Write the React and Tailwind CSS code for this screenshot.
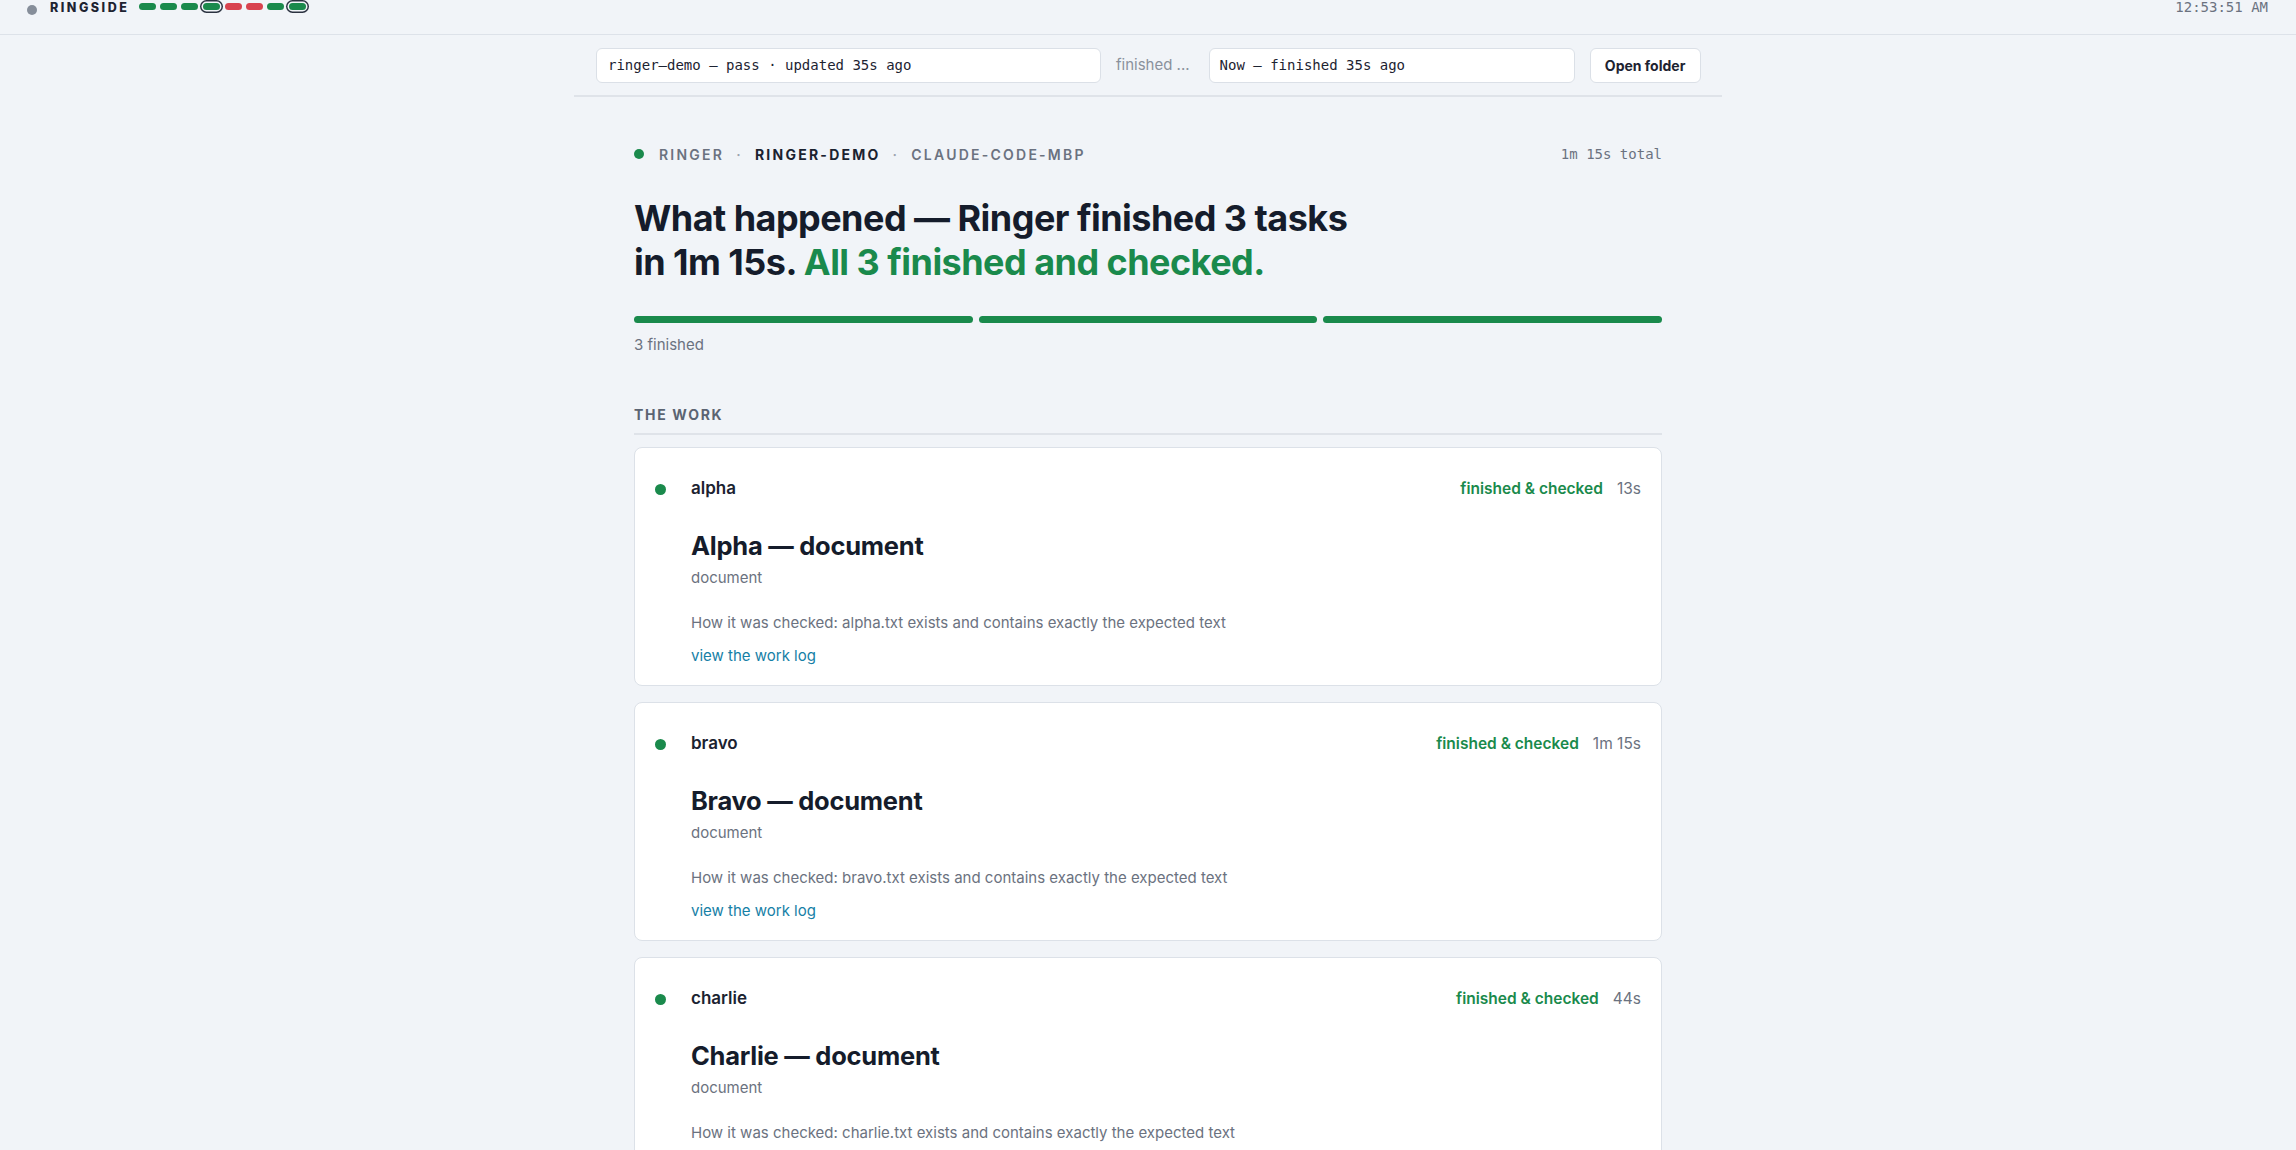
import React from 'react'

const pills = [
  { c: 'bg-[#1a8a4c]' },
  { c: 'bg-[#1a8a4c]' },
  { c: 'bg-[#1a8a4c]' },
  { c: 'bg-[#1a8a4c]', ring: true },
  { c: 'bg-[#d8434f]' },
  { c: 'bg-[#d8434f]' },
  { c: 'bg-[#1a8a4c]' },
  { c: 'bg-[#1a8a4c]', ring: true },
]

const tasks = [
  { id: 'alpha', title: 'Alpha — document', time: '13s', file: 'alpha.txt' },
  { id: 'bravo', title: 'Bravo — document', time: '1m 15s', file: 'bravo.txt' },
  { id: 'charlie', title: 'Charlie — document', time: '44s', file: 'charlie.txt' },
]

const mono = { fontFamily: '"DejaVu Sans Mono", "Liberation Mono", monospace' }

function TopBar() {
  return (
    <div className="h-[35px] flex items-start justify-between pl-[27px] pr-[28px] border-b border-[#dde2e9]">
      <div className="flex items-start">
        <span className="w-[10px] h-[10px] rounded-full bg-[#868e9a] mt-[5px]" />
        <span className="ml-[13px] text-[12.5px] leading-[16px] font-extrabold tracking-[0.2em] text-[#1d2331]">RINGSIDE</span>
        <div className="flex items-center gap-[4px] ml-[10px] mt-[3px]">
          {pills.map((p, i) => (
            <span
              key={i}
              className={`w-[17px] h-[7px] rounded-full ${p.c} ${p.ring ? 'ring-[1.5px] ring-[#2b3240] ring-offset-[1.5px] ring-offset-[#f1f4f8] mx-[1px]' : ''}`}
            />
          ))}
        </div>
      </div>
      <span className="text-[14px] leading-[14px] text-[#6b7280]" style={mono}>12:53:51 AM</span>
    </div>
  )
}

function Toolbar() {
  return (
    <div className="w-[1148px] mx-auto flex items-center gap-[15px] px-[22px] pt-[13px] pb-[12px] border-b-2 border-[#dfe3e9]">
      <div className="w-[505px] shrink-0 h-[35px] flex items-center px-[11px] bg-white border border-[#dbe0e7] rounded-[6px] text-[14px] text-[#1d2331]" style={mono}>
        ringer–demo — pass · updated 35s ago
      </div>
      <span className="shrink-0 text-[15px] text-[#8a919c] mr-[4px] whitespace-nowrap">finished ...</span>
      <div className="w-[366px] shrink-0 h-[35px] flex items-center px-[10px] bg-white border border-[#dbe0e7] rounded-[6px] text-[14px] text-[#1d2331]" style={mono}>
        Now — finished 35s ago
      </div>
      <button className="shrink-0 whitespace-nowrap h-[35px] w-[111px] bg-white border border-[#dbe0e7] rounded-[6px] text-[14px] font-bold text-[#1d2331]">
        Open folder
      </button>
    </div>
  )
}

function TaskCard({ task }) {
  return (
    <div className="bg-white border border-[#dce1e8] rounded-[8px] pl-[20px] pr-[20px] pt-[31px] pb-[19px]">
      <div className="flex items-center justify-between h-[20px]">
        <div className="flex items-center">
          <span className="w-[11px] h-[11px] rounded-full bg-[#1a8a4c]" />
          <span className="ml-[25px] text-[17px] font-semibold text-[#1b2230]">{task.id}</span>
        </div>
        <div className="flex items-center gap-[14px] text-[15.5px]">
          <span className="font-semibold text-[#1a8a4c]">finished &amp; checked</span>
          <span className="text-[#6b7280]">{task.time}</span>
        </div>
      </div>
      <div className="pl-[36px]">
        <h3 className="mt-[31px] text-[25.5px] leading-[32px] font-bold text-[#151c2b] tracking-[-0.01em]">{task.title}</h3>
        <p className="mt-[6px] text-[15px] leading-[20px] text-[#6b7280]">document</p>
        <p className="mt-[25px] text-[15px] leading-[20px] text-[#6b7280]">
          How it was checked: {task.file} exists and contains exactly the expected text
        </p>
        <p className="mt-[13px] text-[15px] leading-[20px] text-[#1680a6]">view the work log</p>
      </div>
    </div>
  )
}

export default function App() {
  return (
    <div className="min-h-screen bg-[#f1f4f8] text-[#1b2230]" style={{ fontFamily: 'Inter, "Noto Sans", sans-serif' }}>
      <TopBar />
      <Toolbar />
      <main className="w-[1028px] mx-auto pt-[48px] pb-[40px]">
        <div className="flex items-center justify-between h-[18px]">
          <div className="flex items-center text-[14px] font-semibold tracking-[0.16em] uppercase">
            <span className="w-[10px] h-[10px] rounded-full bg-[#1a8a4c] mr-[15px]" />
            <span className="text-[#6b7280]">Ringer</span>
            <span className="mx-[12px] text-[#9ca3af]">·</span>
            <span className="text-[#1b2230] font-bold">Ringer-demo</span>
            <span className="mx-[12px] text-[#9ca3af]">·</span>
            <span className="text-[#6b7280]">Claude-code-mbp</span>
          </div>
          <span className="text-[14px] text-[#6b7280]" style={mono}>1m 15s total</span>
        </div>

        <h1 className="mt-[33px] text-[36px] leading-[44px] font-bold tracking-[-0.015em] text-[#151c2b]">
          What happened — Ringer finished 3 tasks
          <br />
          in 1m 15s. <span className="text-[#1a8a4c]">All 3 finished and checked.</span>
        </h1>

        <div className="mt-[32px] flex gap-[6px]">
          <div className="flex-1 h-[7px] rounded-full bg-[#1a8a4c]" />
          <div className="flex-1 h-[7px] rounded-full bg-[#1a8a4c]" />
          <div className="flex-1 h-[7px] rounded-full bg-[#1a8a4c]" />
        </div>
        <p className="mt-[12px] text-[15px] leading-[20px] text-[#6b7280]">3 finished</p>

        <h2 className="mt-[49px] pb-[8px] border-b-2 border-[#dfe3e9] text-[14px] font-bold tracking-[0.12em] text-[#5b6472]">
          THE WORK
        </h2>

        <div className="mt-[12px] flex flex-col gap-[16px]">
          {tasks.map((t) => (
            <TaskCard key={t.id} task={t} />
          ))}
        </div>
      </main>
    </div>
  )
}
